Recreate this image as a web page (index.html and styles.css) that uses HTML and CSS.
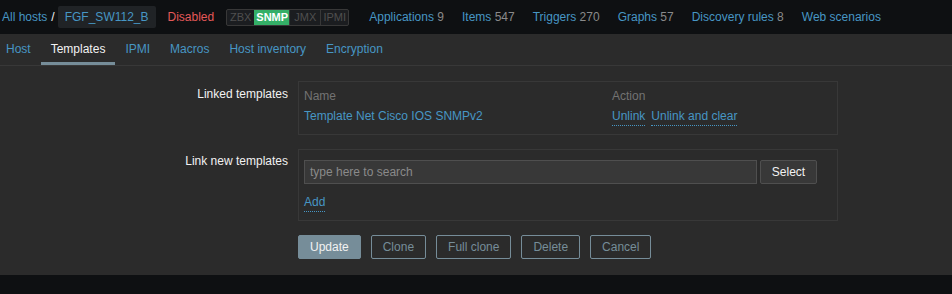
FILE: index.html
```html
<!DOCTYPE html>
<html>
<head>
<meta charset="utf-8">
<link rel="stylesheet" href="styles.css">
</head>
<body>
<header class="topbar">
  <nav class="crumbs">
    <a class="link">All hosts</a>
    <span class="slash">/</span>
    <span class="hostname">FGF_SW112_B</span>
  </nav>
  <span class="disabled">Disabled</span>
  <div class="status">
    <span class="st st-zbx">ZBX</span><span class="st st-snmp on">SNMP</span><span class="st st-jmx">JMX</span><span class="st st-ipmi">IPMI</span>
  </div>
  <ul class="hostnav">
    <li><a class="link">Applications</a> <span class="cnt">9</span></li>
    <li><a class="link">Items</a> <span class="cnt">547</span></li>
    <li><a class="link">Triggers</a> <span class="cnt">270</span></li>
    <li><a class="link">Graphs</a> <span class="cnt">57</span></li>
    <li><a class="link">Discovery rules</a> <span class="cnt">8</span></li>
    <li><a class="link">Web scenarios</a></li>
  </ul>
</header>
<main class="panel">
  <ul class="tabs">
    <li class="tab first">Host</li>
    <li class="tab active">Templates</li>
    <li class="tab">IPMI</li>
    <li class="tab">Macros</li>
    <li class="tab">Host inventory</li>
    <li class="tab">Encryption</li>
  </ul>
  <form class="form">
    <div class="row">
      <div class="label">Linked templates</div>
      <div class="box">
        <table class="linked">
          <thead>
            <tr><th class="c-name">Name</th><th>Action</th></tr>
          </thead>
          <tbody>
            <tr>
              <td class="c-name"><a class="link">Template Net Cisco IOS SNMPv2</a></td>
              <td><a class="link dotted">Unlink</a><a class="link dotted gap">Unlink and clear</a></td>
            </tr>
          </tbody>
        </table>
      </div>
    </div>
    <div class="row row2">
      <div class="label">Link new templates</div>
      <div class="box box2">
        <div class="ms">
          <div class="ms-input">type here to search</div>
          <button type="button" class="btn-select">Select</button>
        </div>
        <a class="link dotted add">Add</a>
      </div>
    </div>
    <div class="row buttons">
      <div class="label"></div>
      <div class="btns">
        <button type="button" class="btn primary">Update</button>
        <button type="button" class="btn alt">Clone</button>
        <button type="button" class="btn alt">Full clone</button>
        <button type="button" class="btn alt">Delete</button>
        <button type="button" class="btn alt">Cancel</button>
      </div>
    </div>
  </form>
</main>
</body>
</html>
```

FILE: styles.css
```css
* { box-sizing: border-box; }
html, body {
  margin: 0;
  padding: 0;
  background: #0e1012;
  font-family: "Liberation Sans", Arial, sans-serif;
  font-size: 12px;
  color: #f2f2f2;
}
ul { list-style: none; margin: 0; padding: 0; }
.link { color: #4796c4; text-decoration: none; }
.dotted { border-bottom: 1px dotted #4796c4; padding-bottom: 2px; }

.topbar {
  height: 34px;
  display: flex;
  align-items: center;
  padding-left: 2px;
}
.crumbs { display: flex; align-items: center; }
.slash { margin: 0 3px 0 4px; color: #f2f2f2; }
.hostname {
  background: #202326;
  color: #4796c4;
  height: 22px;
  line-height: 22px;
  padding: 0 7px;
  border-radius: 2px;
}
.disabled { color: #e45959; margin-left: 12px; }
.status {
  margin-left: 12px;
  display: flex;
  height: 17px;
  border: 1px solid #383838;
  border-radius: 2px;
  background: #1b1d20;
}
.st {
  color: #4f4f4f;
  font-size: 11px;
  line-height: 15px;
  text-align: center;
  border-left: 1px solid #383838;
}
.st-zbx { width: 27px; border-left: 0; }
.st-snmp { width: 35px; }
.st-jmx { width: 31px; }
.st-ipmi { width: 28px; }
.st.on { background: #34af67; color: #ffffff; font-weight: bold; border-left-color: #34af67; }
.hostnav { display: flex; margin-left: 20px; gap: 18px; }
.cnt { color: #8a8a8a; }

.panel {
  background: #2b2b2b;
  padding-bottom: 16px;
}
.tabs {
  display: flex;
  height: 32px;
  border-bottom: 1px solid #383838;
}
.tab {
  color: #4796c4;
  padding: 0 10px;
  line-height: 30px;
  border-bottom: 3px solid transparent;
}
.tab.first { padding-left: 6px; }
.tab.active { color: #f2f2f2; border-bottom-color: #768d99; }

.form { padding-top: 15px; }
.row { display: flex; }
.label {
  width: 298px;
  padding-right: 10px;
  text-align: right;
  padding-top: 6px;
}
.box {
  width: 540px;
  border: 1px solid #383838;
  padding: 0 5px;
}
.linked { border-collapse: collapse; width: 100%; }
.linked th {
  color: #737373;
  font-weight: normal;
  text-align: left;
  padding: 7px 0 0;
  height: 21px;
}
.linked td { padding: 6px 0 0; height: 31px; vertical-align: top; }
.c-name { width: 308px; }
.gap { margin-left: 6px; }
.row2 { margin-top: 14px; }
.row2 .label { padding-top: 5px; }
.box2 { padding-top: 10px; height: 72px; }
.ms { display: flex; }
.ms-input {
  width: 453px;
  height: 24px;
  background: #383838;
  border: 1px solid #4f4f4f;
  color: #8a8a8a;
  padding: 0 5px;
  line-height: 22px;
}
.btn-select {
  margin-left: 3px;
  height: 24px;
  width: 57px;
  background: #383838;
  border: 1px solid #4f4f4f;
  color: #f2f2f2;
  font: inherit;
  border-radius: 2px;
}
.add { display: inline-block; margin-top: 12px; line-height: 13px; }
.buttons { margin-top: 14px; }
.btns { display: flex; gap: 10px; }
.btn {
  font: inherit;
  height: 24px;
  padding: 0 11px;
  border-radius: 2px;
  border: 1px solid #768d99;
  background: transparent;
  color: #768d99;
}
.btn.primary { background: #768d99; color: #f2f2f2; }
```
